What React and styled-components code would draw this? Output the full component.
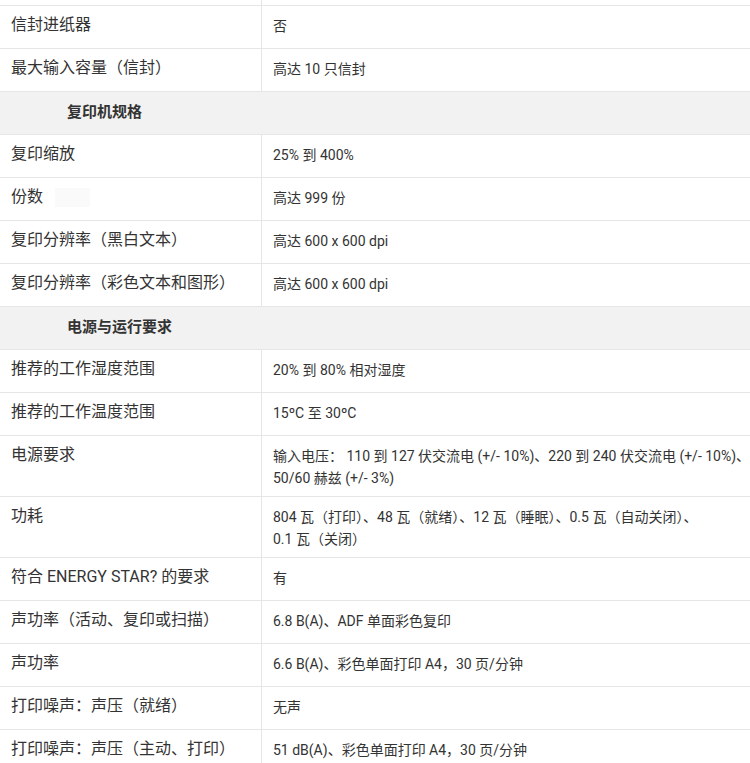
import React from "react";
import styled, { createGlobalStyle } from "styled-components";

const Global = createGlobalStyle`
  html, body { margin: 0; padding: 0; background: #fff; }
  body {
    font-family: Roboto, "Noto Sans CJK SC", sans-serif;
    color: #333;
  }
`;

const Table = styled.div`
  width: 750px;
  overflow: hidden;
`;

const Row = styled.div`
  display: grid;
  grid-template-columns: 262px 1fr;
  min-height: ${(p) => (p.$stub ? "5px" : "42px")};
  border-bottom: 1px solid #e6e6e6;
`;

const Label = styled.div`
  border-right: 1px solid #e6e6e6;
  padding: ${(p) => (p.$empty ? "0" : "8px 11px 8px")};
  font-size: 16px;
  line-height: 22px;
  color: #333;
`;

const Value = styled.div`
  padding: 9px 11px 7px;
  font-size: 14px;
  line-height: 22px;
  color: #333;
`;

const Line = styled.span`
  display: block;
  white-space: nowrap;
`;

const SectionRow = styled.div`
  background: #f2f2f2;
  border-bottom: 1px solid #e6e6e6;
  height: 43px;
  box-sizing: border-box;
  padding: 9px 11px 0 67px;
  font-size: 15px;
  line-height: 22px;
  font-weight: 700;
  color: #333;
`;

const Ghost = styled.span`
  display: inline-block;
  width: 35px;
  height: 19px;
  margin-left: 12px;
  vertical-align: middle;
  background: #fafafa;
`;

const rows = [
  { t: "row", l: "信封进纸器", v: "否" },
  { t: "row", l: "最大输入容量（信封）", v: "高达 10 只信封" },
  { t: "sec", l: "复印机规格" },
  { t: "row", l: "复印缩放", v: "25% 到 400%" },
  { t: "row", l: "份数", v: "高达 999 份", ghost: true },
  { t: "row", l: "复印分辨率（黑白文本）", v: "高达 600 x 600 dpi" },
  { t: "row", l: "复印分辨率（彩色文本和图形）", v: "高达 600 x 600 dpi" },
  { t: "sec", l: "电源与运行要求" },
  { t: "row", l: "推荐的工作湿度范围", v: "20% 到 80% 相对湿度" },
  { t: "row", l: "推荐的工作温度范围", v: "15ºC 至 30ºC" },
  {
    t: "row",
    l: "电源要求",
    v: ["输入电压： 110 到 127 伏交流电 (+/- 10%)、220 到 240 伏交流电 (+/- 10%)、", "50/60 赫兹 (+/- 3%)"],
  },
  {
    t: "row",
    l: "功耗",
    v: ["804 瓦（打印）、48 瓦（就绪）、12 瓦（睡眠）、0.5 瓦（自动关闭）、", "0.1 瓦（关闭）"],
  },
  { t: "row", l: "符合 ENERGY STAR? 的要求", v: "有" },
  { t: "row", l: "声功率（活动、复印或扫描）", v: "6.8 B(A)、ADF 单面彩色复印" },
  { t: "row", l: "声功率", v: "6.6 B(A)、彩色单面打印 A4，30 页/分钟" },
  { t: "row", l: "打印噪声：声压（就绪）", v: "无声" },
  { t: "row", l: "打印噪声：声压（主动、打印）", v: "51 dB(A)、彩色单面打印 A4，30 页/分钟" },
];

export default function App() {
  return (
    <>
      <Global />
      <Table>
        <Row $stub>
          <Label $empty />
          <div />
        </Row>
        {rows.map((r, i) =>
          r.t === "sec" ? (
            <SectionRow key={i}>{r.l}</SectionRow>
          ) : (
            <Row key={i}>
              <Label>
                {r.l}
                {r.ghost && <Ghost />}
              </Label>
              <Value>
                {Array.isArray(r.v)
                  ? r.v.map((line, j) => <Line key={j}>{line}</Line>)
                  : r.v}
              </Value>
            </Row>
          )
        )}
      </Table>
    </>
  );
}
